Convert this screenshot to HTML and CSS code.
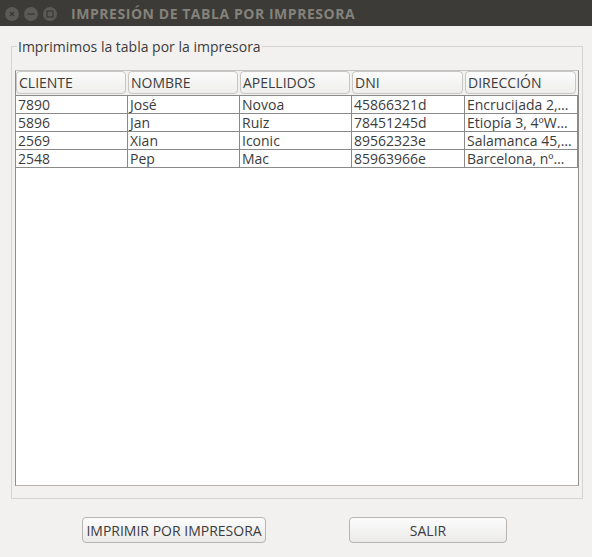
FILE: index.html
```html
<!DOCTYPE html>
<html>
<head>
<meta charset="utf-8">
<link rel="stylesheet" href="styles.css">
</head>
<body>
<div class="window">
  <div class="titlebar">
    <div class="wbtns">
      <span class="wbtn"><svg width="14" height="14" viewBox="0 0 14 14"><path d="M5 5 L9 9 M9 5 L5 9" stroke="#3a3935" stroke-width="1.2" fill="none"/></svg></span>
      <span class="wbtn"><svg width="14" height="14" viewBox="0 0 14 14"><path d="M3.5 7 H10.5" stroke="#3a3935" stroke-width="1.4" fill="none"/></svg></span>
      <span class="wbtn"><svg width="14" height="14" viewBox="0 0 14 14"><rect x="4" y="4" width="6" height="6" stroke="#3a3935" stroke-width="1.2" fill="none"/></svg></span>
    </div>
    <div class="title">IMPRESIÓN DE TABLA POR IMPRESORA</div>
  </div>
  <div class="content">
    <fieldset class="group">
      <legend class="legend">Imprimimos la tabla por la impresora</legend>
      <div class="table">
        <div class="header">
          <div class="hcell c1"><span>CLIENTE</span></div>
          <div class="hcell c2"><span>NOMBRE</span></div>
          <div class="hcell c3"><span>APELLIDOS</span></div>
          <div class="hcell c4"><span>DNI</span></div>
          <div class="hcell c5"><span>DIRECCIÓN</span></div>
        </div>
        <div class="body">
          <div class="row">
            <div class="cell c1">7890</div><div class="cell c2">José</div><div class="cell c3">Novoa</div><div class="cell c4">45866321d</div><div class="cell c5">Encrucijada 2,…</div>
          </div>
          <div class="row">
            <div class="cell c1">5896</div><div class="cell c2">Jan</div><div class="cell c3">Ruiz</div><div class="cell c4">78451245d</div><div class="cell c5">Etiopía 3, 4ºW…</div>
          </div>
          <div class="row">
            <div class="cell c1">2569</div><div class="cell c2">Xian</div><div class="cell c3">Iconic</div><div class="cell c4">89562323e</div><div class="cell c5">Salamanca 45,…</div>
          </div>
          <div class="row">
            <div class="cell c1">2548</div><div class="cell c2">Pep</div><div class="cell c3">Mac</div><div class="cell c4">85963966e</div><div class="cell c5">Barcelona, nº…</div>
          </div>
        </div>
      </div>
    </fieldset>
    <div class="actions">
      <button class="btn btn-print">IMPRIMIR POR IMPRESORA</button>
      <button class="btn btn-exit">SALIR</button>
    </div>
  </div>
</div>
</body>
</html>
```

FILE: styles.css
```css
html, body {
  margin: 0;
  padding: 0;
}
body {
  width: 592px;
  height: 557px;
  overflow: hidden;
  background: #f2f1f0;
  font-family: "Open Sans", "DejaVu Sans", sans-serif;
  color: #3c3c3c;
}
.window {
  width: 592px;
  height: 557px;
  display: flex;
  flex-direction: column;
}
.titlebar {
  height: 26px;
  background: #3c3b37;
  display: flex;
  align-items: center;
  flex-shrink: 0;
}
.wbtns {
  display: flex;
  gap: 5px;
  padding-left: 5px;
  padding-top: 1px;
}
.wbtn {
  width: 14px;
  height: 14px;
  border-radius: 50%;
  background: #5b5a55;
  display: block;
}
.wbtn svg {
  display: block;
}
.title {
  margin-left: 14px;
  font-weight: bold;
  font-size: 14px;
  color: #85827b;
  letter-spacing: 0.55px;
}
.content {
  padding: 12px 11px 0 11px;
  display: flex;
  flex-direction: column;
}
.group {
  margin: 0;
  border: 1px solid #d6d4d1;
  padding: 0 3px 0 3px;
  height: 461px;
  box-sizing: border-box;
  width: 571px;
}
.legend {
  font-size: 14px;
  padding: 0 1px;
  margin-left: 2px;
  line-height: 17px;
  color: #3c3c3c;
}
.table {
  margin-top: 15px;
  border: 1px solid #8f8e8c;
  border-color: #c4c2bf #8f8e8c #b3b1ae #8f8e8c;
  background: #fff;
  height: 416px;
  box-sizing: border-box;
  display: flex;
  flex-direction: column;
}
.header {
  display: flex;
  background: #f2f1f0;
  height: 24px;
}
.hcell {
  box-sizing: border-box;
  padding: 0 2px 1px 0;
}
.hcell span {
  display: block;
  height: 23px;
  box-sizing: border-box;
  border: 1px solid #c8c6c2;
  border-radius: 4px;
  background: linear-gradient(#fbfbfb, #efeeed);
  font-size: 14px;
  line-height: 21px;
  padding-left: 2px;
  color: #3c3c3c;
}
.body {
  border-top: 1px solid #8a8a8a;
}
.row {
  display: flex;
  height: 18px;
  border-bottom: 1px solid #8a8a8a;
  box-sizing: border-box;
}
.cell {
  box-sizing: border-box;
  border-right: 1px solid #8a8a8a;
  font-size: 14px;
  line-height: 17px;
  padding-left: 2px;
  white-space: nowrap;
  overflow: hidden;
}
.c1, .c2, .c3 { width: 112px; }
.c4, .c5 { width: 113px; }
.actions {
  display: flex;
  padding: 18px 0 0 71px;
  gap: 83px;
}
.btn {
  height: 26px;
  box-sizing: border-box;
  border: 1px solid #b7b5b1;
  border-radius: 4px;
  background: linear-gradient(#fcfcfc, #ebeae9);
  font-family: "Open Sans", "DejaVu Sans", sans-serif;
  font-size: 14px;
  color: #3c3c3c;
  padding: 0;
  margin: 0;
}
.btn-print { width: 184px; }
.btn-exit { width: 158px; }
```
